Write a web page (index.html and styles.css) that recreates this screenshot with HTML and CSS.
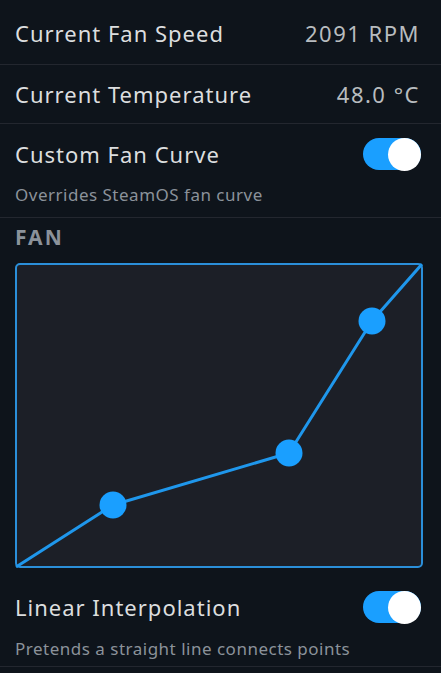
FILE: index.html
```html
<!DOCTYPE html>
<html>
<head>
<meta charset="utf-8">
<link rel="stylesheet" href="styles.css">
</head>
<body>
<div class="panel">
  <div class="row row-first">
    <span class="label">Current Fan Speed</span>
    <span class="value">2091 RPM</span>
  </div>
  <div class="row">
    <span class="label">Current Temperature</span>
    <span class="value">48.0 °C</span>
  </div>
  <div class="toggle-row">
    <div class="toggle-line">
      <span class="label">Custom Fan Curve</span>
      <span class="toggle"><span class="knob"></span></span>
    </div>
    <div class="desc">Overrides SteamOS fan curve</div>
  </div>
  <div class="section-title">FAN</div>
  <div class="graph">
    <svg width="408" height="305" viewBox="0 0 408 305">
      <rect x="1" y="1" width="406" height="303" rx="4" ry="4" fill="#1c1f27" stroke="#2b8fd9" stroke-width="2"/>
      <polyline points="1,304 98,242 274,190 357,58 407,1" fill="none" stroke="#1f97ec" stroke-width="3" stroke-linejoin="round"/>
      <circle cx="98" cy="242" r="13.5" fill="#1a9fff"/>
      <circle cx="274" cy="190" r="13.5" fill="#1a9fff"/>
      <circle cx="357" cy="58" r="13.5" fill="#1a9fff"/>
    </svg>
  </div>
  <div class="toggle-row toggle-row-last">
    <div class="toggle-line">
      <span class="label">Linear Interpolation</span>
      <span class="toggle"><span class="knob"></span></span>
    </div>
    <div class="desc">Pretends a straight line connects points</div>
  </div>
</div>
</body>
</html>
```
FILE: styles.css
```css
html, body {
  margin: 0;
  padding: 0;
  background: #0e141b;
}
body {
  font-family: "Noto Sans", "DejaVu Sans", sans-serif;
  color: #dcdedf;
  width: 441px;
  height: 673px;
  overflow: hidden;
}
.panel {
  display: flex;
  flex-direction: column;
}
.row {
  display: flex;
  align-items: center;
  justify-content: space-between;
  height: 58px;
  padding: 0 21px 0 15px;
  border-bottom: 1px solid #23272f;
}
.row-first {
  height: 62px;
  padding-top: 2px;
}
.label {
  font-size: 22px;
  letter-spacing: 1px;
  color: #dcdedf;
}
.value {
  font-size: 22px;
  letter-spacing: 1.5px;
  color: #b8bcbf;
}
.toggle-row {
  padding: 13px 20px 11px 15px;
  border-bottom: 1px solid #23272f;
}
.toggle-line {
  display: flex;
  align-items: center;
  justify-content: space-between;
  height: 34px;
}
.toggle {
  position: relative;
  width: 58px;
  height: 32px;
  border-radius: 16px;
  background: #1a9fff;
}
.knob {
  position: absolute;
  right: 0;
  top: 0;
  width: 33px;
  height: 33px;
  margin-top: -0.5px;
  border-radius: 50%;
  background: #ffffff;
}
.desc {
  margin-top: 13px;
  font-size: 17px;
  line-height: 22px;
  letter-spacing: 0.5px;
  color: #8b929a;
}
.section-title {
  padding: 5px 15px 0;
  font-size: 21px;
  font-weight: bold;
  letter-spacing: 2px;
  color: #8b929a;
  height: 40px;
  box-sizing: border-box;
}
.graph {
  margin: 5px 0 0 15px;
  height: 305px;
}
.graph svg {
  display: block;
}
.toggle-row-last {
  padding-top: 22px;
  padding-bottom: 6px;
}
.toggle-row-last .desc {
  margin-top: 14px;
}
```
